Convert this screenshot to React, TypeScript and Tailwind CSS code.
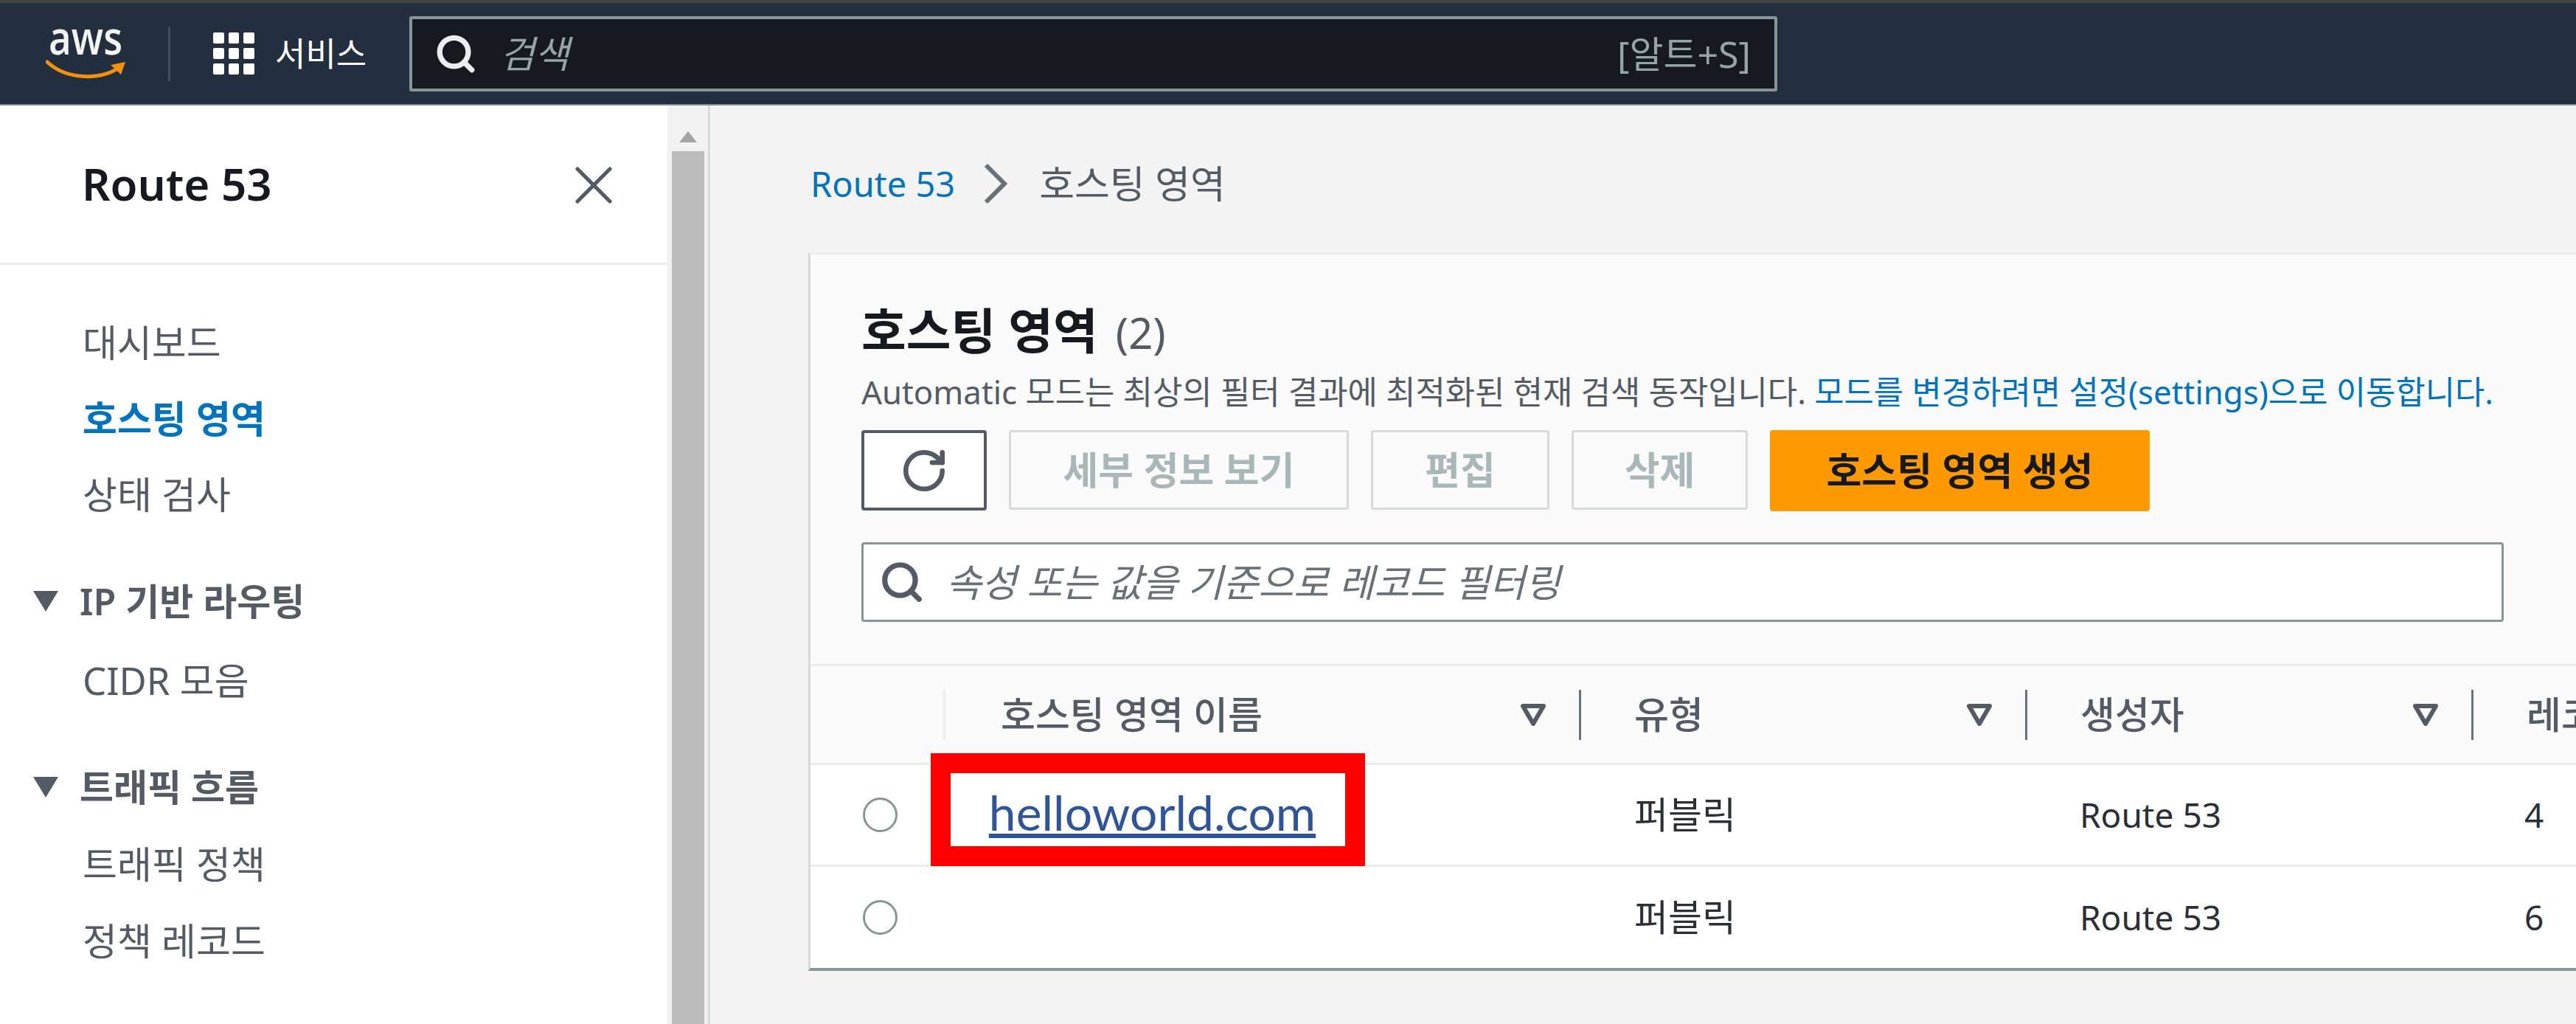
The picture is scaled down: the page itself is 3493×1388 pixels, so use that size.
import { RotateCw, Search, X } from 'lucide-react';

const FONT = '[font-family:"Noto_Sans","Noto_Sans_CJK_KR",sans-serif]';

const navTop = ['대시보드', '호스팅 영역', '상태 검사'];

function AwsLogo() {
  return (
    <svg width="110" height="70" viewBox="0 0 110 70" className="shrink-0">
      <text x="54" y="36" textAnchor="middle" fill="#f2f3f3" fontSize="64" fontWeight="600" fontFamily="Open Sans, sans-serif" textLength="100" lengthAdjust="spacingAndGlyphs">aws</text>
      <path d="M2 46 C28 70 74 72 102 52" fill="none" stroke="#f29111" strokeWidth="5" strokeLinecap="round" />
      <path d="M88 50 L108 46 L102 63 Z" fill="#f29111" />
    </svg>
  );
}

function GridIcon() {
  return (
    <div className="grid grid-cols-3 gap-[6px] w-[56px] shrink-0">
      {Array.from({ length: 9 }).map((_, i) => (
        <span key={i} className="h-[15px] rounded-[2px] bg-white" />
      ))}
    </div>
  );
}

function FilterTriangle() {
  return (
    <svg width="36" height="30" viewBox="0 0 36 30" className="shrink-0">
      <path d="M4 3 H32 L18 27 Z" fill="none" stroke="#545b64" strokeWidth="6" strokeLinejoin="round" />
    </svg>
  );
}

function NavGroupTitle({ label }: { label: string }) {
  return (
    <div className="flex items-center gap-[28px] pl-[44px] h-[60px] text-[50px] font-semibold text-[#545b64]">
      <svg width="36" height="30" viewBox="0 0 36 30" className="shrink-0">
        <path d="M1 1 H35 L18 29 Z" fill="#545b64" />
      </svg>
      <span>{label}</span>
    </div>
  );
}

function NavItem({ label, active }: { label: string; active?: boolean }) {
  return (
    <div className={`pl-[112px] h-[60px] flex items-center text-[51px] ${active ? 'font-semibold text-[#0073bb]' : 'text-[#545b64]'}`}>
      {label}
    </div>
  );
}

function Sidebar() {
  return (
    <aside className="w-[905px] shrink-0 bg-white">
      <div className="h-[216px] border-b-[3px] border-[#eaeded] flex items-start justify-between pl-[111px] pr-[56px] pt-[64px]">
        <span className="mt-[4px] text-[60px] leading-[76px] font-semibold text-[#16191f]">Route 53</span>
        <X className="w-[88px] h-[88px] text-[#545b64]" strokeWidth={1.4} />
      </div>
      <nav className="pt-[75px]">
        <div className="flex flex-col gap-[43px]">
          {navTop.map((label) => (
            <NavItem key={label} label={label} active={label === '호스팅 영역'} />
          ))}
        </div>
        <div className="mt-[85px]">
          <NavGroupTitle label="IP 기반 라우팅" />
        </div>
        <div className="mt-[47px]">
          <NavItem label="CIDR 모음" />
        </div>
        <div className="mt-[85px]">
          <NavGroupTitle label="트래픽 흐름" />
        </div>
        <div className="mt-[44px] flex flex-col gap-[44px]">
          <NavItem label="트래픽 정책" />
          <NavItem label="정책 레코드" />
        </div>
      </nav>
    </aside>
  );
}

function Scrollbar() {
  return (
    <div className="w-[58px] shrink-0 bg-[#f1f1f1] flex flex-col items-center border-r-[3px] border-[#d5dbdb]">
      <div className="h-[58px] flex items-end pb-[8px]">
        <div className="w-0 h-0 border-x-[12px] border-x-transparent border-b-[15px] border-b-[#a3a3a3]" />
      </div>
      <div className="w-[44px] flex-1 bg-[#bcbcbc] mt-[4px]" />
    </div>
  );
}

function ActionButton({ label, className }: { label: string; className: string }) {
  return (
    <div className={`h-[108px] flex items-center justify-center rounded-[4px] border-[3px] border-[#d5dbdb] bg-[#fafafa] text-[52px] font-semibold text-[#aab7b8] ${className}`}>
      {label}
    </div>
  );
}

function HeaderCell({ label, className }: { label: string; className: string }) {
  return (
    <div className={`flex items-center justify-between ${className}`}>
      <span>{label}</span>
      <div className="flex items-center">
        <FilterTriangle />
        <span className="ml-[44px] w-[3px] h-[68px] bg-[#687078]" />
      </div>
    </div>
  );
}

function DataRow({ type, records, last }: { type: string; records: string; last?: boolean }) {
  return (
    <div className={`flex items-center bg-white text-[#2b2f36] ${last ? 'flex-1' : 'h-[138px] border-b-[3px] border-[#eaeded]'}`}>
      <div className="w-[71px] shrink-0" />
      <span className="w-[47px] h-[47px] rounded-full border-[3px] border-[#879596] bg-white shrink-0" />
      <div className="w-[999px] shrink-0" />
      <span className="w-[604px] shrink-0 text-[50px]">{type}</span>
      <span className="w-[603px] shrink-0 text-[46px]">Route 53</span>
      <span className="text-[46px]">{records}</span>
    </div>
  );
}

export default function App() {
  return (
    <div className={`relative w-[3493px] h-[1388px] overflow-hidden flex flex-col bg-[#f3f3f3] ${FONT}`}>
      <header className="h-[143px] shrink-0 bg-[#232f3e] border-t-[4px] border-t-[#444] border-b-[2px] border-b-[#7f8a94] flex items-center pl-[62px]">
        <AwsLogo />
        <span className="ml-[56px] w-[3px] h-[74px] bg-[#414d5c]" />
        <div className="ml-[58px]"><GridIcon /></div>
        <span className="ml-[28px] w-[124px] text-[45px] text-white whitespace-nowrap">서비스</span>
        <div className="ml-[58px] w-[1855px] h-[102px] flex items-center rounded-[3px] border-[4px] border-[#879596] bg-[#16191f] pl-[30px] pr-[32px]">
          <Search className="w-[58px] h-[58px] text-[#eaeded]" strokeWidth={3} />
          <span className="ml-[31px] text-[51px] italic text-[#95a5a6]">검색</span>
          <span className="ml-auto mt-[2px] text-[50px] text-[#95a5a6]">[알트+S]</span>
        </div>
      </header>

      <div className="flex-1 flex min-h-0">
        <Sidebar />
        <Scrollbar />
        <main className="flex-1 min-w-0 pl-[133px] overflow-hidden">
          <div className="flex items-center h-[76px] mt-[68px]">
            <span className="text-[47px] text-[#0073bb] ml-[3px]">Route 53</span>
            <svg width="34" height="56" viewBox="0 0 34 56" className="ml-[38px] shrink-0">
              <path d="M4 3 L29 28 L4 53" fill="none" stroke="#687078" strokeWidth="6" />
            </svg>
            <span className="ml-[42px] text-[52px] text-[#545b64]">호스팅 영역</span>
          </div>

          <section className="mt-[55px] h-[974px] bg-[#fafafa] border-l-[3px] border-l-[#d5dbdb] border-t-[3px] border-t-[#eaeded] border-b-[4px] border-b-[#879596] flex flex-col">
            <div className="pl-[69px] pt-[60px] pr-[98px]">
              <div className="flex items-baseline h-[84px]">
                <span className="text-[66px] leading-[84px] font-bold text-[#16191f]">호스팅 영역</span>
                <span className="ml-[24px] text-[58px] text-[#545b64]">(2)</span>
              </div>
              <p className="mt-[17px] h-[50px] text-[43.8px] leading-[50px] text-[#545b64] whitespace-nowrap">
                Automatic 모드는 최상의 필터 결과에 최적화된 현재 검색 동작입니다. <span className="text-[#0073bb]">모드를 변경하려면 설정(settings)으로 이동합니다.</span>
              </p>
              <div className="mt-[27px] flex gap-[30px]">
                <div className="w-[170px] h-[109px] flex items-center justify-center rounded-[4px] border-[4px] border-[#545b64] bg-white">
                  <RotateCw className="w-[66px] h-[66px] text-[#545b64]" strokeWidth={2.4} />
                </div>
                <ActionButton label="세부 정보 보기" className="w-[461px]" />
                <ActionButton label="편집" className="w-[242px]" />
                <ActionButton label="삭제" className="w-[239px]" />
                <div className="w-[515px] h-[110px] flex items-center justify-center rounded-[4px] bg-[#ff9900] text-[52px] font-semibold text-[#16191f]">
                  호스팅 영역 생성
                </div>
              </div>
              <div className="mt-[42px] h-[108px] flex items-center rounded-[4px] border-[3px] border-[#879596] bg-white pl-[21px]">
                <Search className="w-[62px] h-[62px] text-[#545b64]" strokeWidth={2.8} />
                <span className="ml-[29px] text-[52px] italic text-[#687078]">속성 또는 값을 기준으로 레코드 필터링</span>
              </div>
            </div>

            <div className="mt-[57px] border-t-[3px] border-[#eaeded] flex-1 flex flex-col overflow-hidden">
              <div className="h-[134px] shrink-0 flex items-center border-b-[3px] border-[#eaeded] text-[51px] font-medium text-[#545b64] whitespace-nowrap">
                <div className="w-[183px] shrink-0 flex justify-end">
                  <span className="w-[3px] h-[68px] bg-[#eaeded]" />
                </div>
                <HeaderCell label="호스팅 영역 이름" className="w-[862px] pl-[75px] shrink-0" />
                <HeaderCell label="유형" className="w-[605px] pl-[72px] shrink-0" />
                <HeaderCell label="생성자" className="w-[605px] pl-[72px] shrink-0" />
                <span className="pl-[72px]">레코드</span>
              </div>
              <DataRow type="퍼블릭" records="4" />
              <DataRow type="퍼블릭" records="6" last />
            </div>
          </section>
        </main>
      </div>

      <div className="absolute left-[1262px] top-[1021px] w-[589px] h-[153px] border-[27px] border-[#ff0000] bg-white flex items-center justify-center pl-[12px] pt-[6px]">
        <span className="text-[66px] leading-none underline text-[#2f5597] [font-family:Lato,sans-serif]">helloworld.com</span>
      </div>
    </div>
  );
}
